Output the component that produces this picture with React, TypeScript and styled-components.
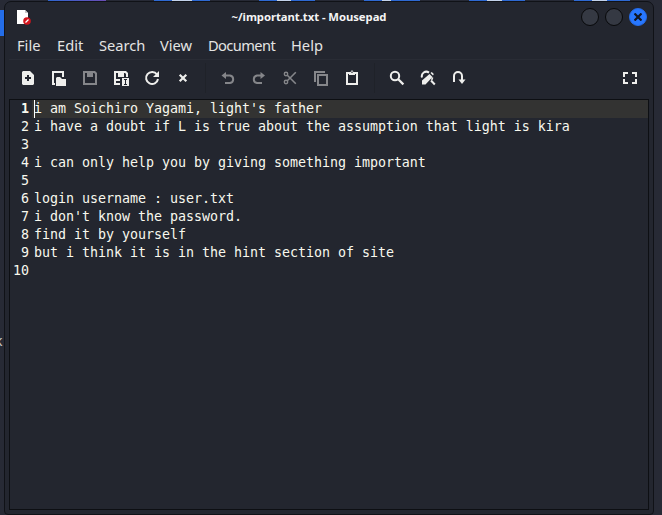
import React from "react";
import styled, { createGlobalStyle } from "styled-components";

const Global = createGlobalStyle`
  html, body { margin: 0; padding: 0; overflow: hidden; }
  * { box-sizing: border-box; }
`;

const Desktop = styled.div`
  position: relative;
  width: 662px;
  height: 515px;
  padding: 1px 8px 0 4px;
  background: #272a35;
  overflow: hidden;
`;

const Strip = styled.div`
  position: absolute;
  top: 0;
  left: 48px;
  display: flex;
  gap: 49px;
  height: 1px;
`;

const Tile = styled.div<{ $purple?: boolean }>`
  width: ${(p) => (p.$purple ? 58 : 56)}px;
  margin-right: ${(p) => (p.$purple ? -1 : 0)}px;
  padding: 0 17px 0 18px;
  background: ${(p) => (p.$purple ? "linear-gradient(90deg, #2f66cf, #6a4db5)" : "#2e69d2")};
`;

const Glint = styled.div<{ $w: number }>`
  width: ${(p) => p.$w}px;
  height: 1px;
  background: #c3d2ea;
`;

const Selection = styled.div`
  position: absolute;
  left: 0;
  top: 10px;
  width: 4px;
  height: 26px;
  background: #246de8;
`;

const Label = styled.span`
  position: absolute;
  left: -5px;
  top: 332px;
  font: 14px/18px "Noto Sans", sans-serif;
  color: #c8c8c8;
`;

const Window = styled.main`
  position: relative;
  display: flex;
  flex-direction: column;
  height: 514px;
  border: 1px solid #101217;
  border-radius: 7px 7px 4px 4px;
  background: #23262f;
  padding: 0 4px 4px;
`;

const TitleBar = styled.header`
  display: grid;
  grid-template-columns: 80px 1fr 80px;
  align-items: center;
  height: 30px;
  padding: 0 0 0 6px;
`;

const Title = styled.h1`
  margin: 0 0 0 -46px;
  text-align: center;
  font: 700 11.3px/18px "Noto Sans", sans-serif;
  letter-spacing: -0.05px;
  color: #f4f4f4;
  white-space: nowrap;
`;

const Controls = styled.div`
  display: flex;
  gap: 6px;
  justify-content: flex-end;
  padding: 0 2px 0 0;
`;

const Control = styled.button<{ $close?: boolean }>`
  display: grid;
  place-items: center;
  width: 18px;
  height: 18px;
  padding: 0;
  border: 1px solid ${(p) => (p.$close ? "#246be8" : "#08090b")};
  border-radius: 50%;
  background: ${(p) => (p.$close ? "#2777ff" : "#353943")};
`;

const Menu = styled.nav`
  display: flex;
  height: 28px;
  padding: 0 8px;
  border-bottom: 1px solid #292c35;
  font: 14.67px/27px "Noto Sans", sans-serif;
  color: #e4e4e3;
`;

const MenuItem = styled.span<{ $w: number; $tight?: boolean }>`
  width: ${(p) => p.$w}px;
  letter-spacing: ${(p) => (p.$tight ? -0.6 : 0)}px;
  white-space: nowrap;
`;

const ToolBar = styled.div`
  display: flex;
  align-items: center;
  height: 39px;
  padding: 0 4px 3px 3px;
`;

const Tool = styled.button<{ $off?: boolean }>`
  width: 31px;
  height: 30px;
  border: 0;
  padding: 0 7px 0 8px;
  background: none;
  color: ${(p) => (p.$off ? "#85868a" : "#eeeeec")};
  svg { display: block; }
`;

const Divider = styled.i`
  width: 1px;
  height: 30px;
  margin: 0 6px 0 7px;
  background: #1f2229;
`;

const Spacer = styled.span`
  flex: 1;
`;

const Editor = styled.section`
  flex: 1;
  border: 1px solid #0d0f13;
  background: #23262f;
  font: 13.333px/17px "DejaVu Sans Mono", monospace;
  letter-spacing: -0.027px;
  color: #f8f8ee;
`;

const Line = styled.div`
  display: flex;
  height: 18px;
  white-space: pre;
`;

const Num = styled.span<{ $current?: boolean }>`
  width: 22px;
  padding-right: 3px;
  display: flex;
  justify-content: flex-end;
  font-weight: ${(p) => (p.$current ? 700 : 400)};
`;

const Code = styled.span<{ $current?: boolean }>`
  position: relative;
  flex: 1;
  padding-left: 2px;
  background: ${(p) => (p.$current ? "#333332" : "transparent")};
`;

const Caret = styled.i`
  position: absolute;
  left: 2px;
  top: 0;
  width: 1px;
  height: 18px;
  background: #fff;
`;

const BG = "#23262f";
const line = { fill: "none", stroke: "currentColor", strokeWidth: 2 };

const icons: Record<string, React.ReactNode> = {
  new: (
    <>
      <path fill="currentColor" d="M3 1h7l4 4v9l-1 1H3l-1-1V2z" />
      <path stroke={BG} strokeWidth="2" d="M8 5v6M5 8h6" />
    </>
  ),
  open: (
    <>
      <path fill="currentColor" d="M1 1h12v6h-2V3H3v10h1v2H1z" />
      <path fill="currentColor" d="M5 8l1-1h3l2 2h4v7H5z" />
    </>
  ),
  save: (
    <>
      <path fill="currentColor" fillRule="evenodd" d="M1 1h12l2 2v12H1zM3 3v10h10V4l-1-1h-1v4H5V3z" />
      <path fill="currentColor" d="M8 2h2v4H8z" />
    </>
  ),
  saveAs: (
    <>
      <path fill="currentColor" d="M1 1h12l2 2v4h-2V4l-1-1h-1v4H5V3H3v6h4v6H1z" />
      <path fill="currentColor" d="M8 2h2v4H8zM9 8h7v8H9z" />
      <path stroke={BG} fill="none" d="M11 9.5h3M12.5 9.5v5M11 14.5h3" />
      <path fill={BG} d="M3 11h4v2H3z" />
    </>
  ),
  reload: (
    <>
      <path {...line} d="M13 4.5A6 6 0 1 0 14 9" />
      <path fill="currentColor" d="M15 1v6H9z" />
    </>
  ),
  close: <path {...line} strokeWidth="2.2" d="M4.7 4.7l6.6 6.6M11.3 4.7l-6.6 6.6" />,
  undo: (
    <>
      <path {...line} d="M4 5.5h6a3.8 3.8 0 0 1 0 7.5H5" />
      <path fill="currentColor" d="M6 2v7L1.5 5.5z" />
    </>
  ),
  redo: (
    <>
      <path {...line} d="M11 5.5H6A3.8 3.8 0 0 0 6 13h5" />
      <path fill="currentColor" d="M9.5 2v7L14 5.5z" />
    </>
  ),
  cut: (
    <>
      <circle cx="4" cy="4" r="1.7" {...line} strokeWidth="1.4" />
      <circle cx="4" cy="12" r="1.7" {...line} strokeWidth="1.4" />
      <path {...line} strokeWidth="1.6" d="M5.3 5.3l8.5 8.4M5.3 10.7l8.5-8.4" />
    </>
  ),
  copy: (
    <>
      <path {...line} d="M2 12V2h10" />
      <rect x="5" y="5" width="9" height="10" {...line} />
    </>
  ),
  paste: (
    <>
      <rect x="3" y="3" width="10" height="11" {...line} />
      <path fill="currentColor" d="M5 2h1.5L8 0l1.5 2H11v3H5z" />
      <path fill={BG} d="M7.4 1.5h1.2v1.4H7.4z" />
    </>
  ),
  find: (
    <>
      <circle cx="6" cy="6" r="4.2" {...line} />
      <path {...line} strokeWidth="2.2" d="M9 9l5.4 5.4" />
    </>
  ),
  replace: (
    <>
      <path {...line} d="M2 7.5A4.5 4.5 0 0 1 9 2.6M11 10.5l3.8 4" />
      <path fill="currentColor" d="M2 14.5V10.5l7.5-6.5 3 3-7 7.5zM10.5 3l1.3-1 2 2-.8 1.4z" />
      <path {...line} strokeWidth="1.6" d="M12.6 7.5l-.9 2.4" />
    </>
  ),
  goto: (
    <>
      <path {...line} d="M3 12V6a4 4 0 0 1 8 0v5" />
      <path fill="currentColor" d="M7.5 9.5h7L11 14z" />
    </>
  ),
  fullscreen: <path {...line} d="M2 7V3h4M10 3h4v4M14 9v4h-4M6 13H2V9" />,
};

type Item = { id: string; off?: boolean } | null;
const tools: Item[] = [
  { id: "new" },
  { id: "open" },
  { id: "save", off: true },
  { id: "saveAs" },
  { id: "reload" },
  { id: "close" },
  null,
  { id: "undo", off: true },
  { id: "redo", off: true },
  { id: "cut", off: true },
  { id: "copy", off: true },
  { id: "paste" },
  null,
  { id: "find" },
  { id: "replace" },
  { id: "goto" },
];

const menu: [string, number][] = [
  ["File", 40],
  ["Edit", 42],
  ["Search", 61],
  ["View", 48],
  ["Document", 83],
  ["Help", 32],
];

const text = [
  "i am Soichiro Yagami, light's father",
  "i have a doubt if L is true about the assumption that light is kira",
  "",
  "i can only help you by giving something important",
  "",
  "login username : user.txt",
  "i don't know the password.",
  "find it by yourself",
  "but i think it is in the hint section of site",
  "",
];

const Icon = ({ id }: { id: string }) => (
  <svg width="16" height="16" viewBox="0 0 16 16">
    {icons[id]}
  </svg>
);

export default function App() {
  return (
    <Desktop>
      <Global />
      <Strip>
        <Tile $purple />
        <Tile><Glint $w={20} /></Tile>
        <Tile><Glint $w={14} /></Tile>
        <Tile><Glint $w={9} /></Tile>
        <Tile><Glint $w={15} /></Tile>
        <Tile><Glint $w={15} /></Tile>
      </Strip>
      <Selection />
      <Label>k</Label>
      <Window>
        <TitleBar>
          <svg width="16" height="16" viewBox="0 0 16 16">
            <path fill="#fff" d="M2 1h8l3 3v11H2z" />
            <path fill="#c8c8c8" d="M10 1l3 3h-3z" />
            <circle cx="12" cy="12" r="3.8" fill="#d3151d" />
            <path stroke="#fff" strokeWidth="1.2" d="M10.5 13.5l3-3" />
          </svg>
          <Title>~/important.txt - Mousepad</Title>
          <Controls>
            <Control aria-label="Minimize" />
            <Control aria-label="Maximize" />
            <Control aria-label="Close" $close>
              <svg width="8" height="8" viewBox="0 0 8 8">
                <path stroke="#101522" strokeWidth="2.2" d="M.5.5l7 7M7.5.5l-7 7" />
              </svg>
            </Control>
          </Controls>
        </TitleBar>
        <Menu>
          {menu.map(([label, width]) => (
            <MenuItem key={label} $w={width} $tight={label === "Document"}>
              {label}
            </MenuItem>
          ))}
        </Menu>
        <ToolBar>
          {tools.map((t, i) =>
            t ? (
              <Tool key={i} $off={t.off} aria-label={t.id}>
                <Icon id={t.id} />
              </Tool>
            ) : (
              <Divider key={i} />
            )
          )}
          <Spacer />
          <Tool aria-label="fullscreen">
            <Icon id="fullscreen" />
          </Tool>
        </ToolBar>
        <Editor>
          {text.map((t, i) => (
            <Line key={i}>
              <Num $current={i === 0}>{i + 1}</Num>
              <Code $current={i === 0}>
                {i === 0 && <Caret />}
                {t}
              </Code>
            </Line>
          ))}
        </Editor>
      </Window>
    </Desktop>
  );
}
